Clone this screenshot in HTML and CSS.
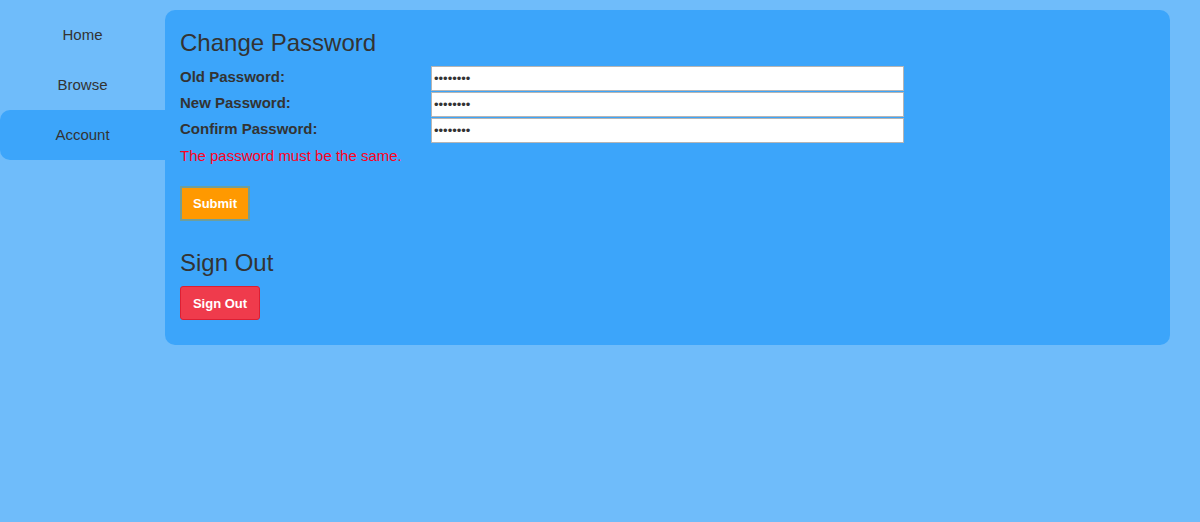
FILE: index.html
```html
<!DOCTYPE html>
<html>
<head>
<meta charset="utf-8">
<link rel="stylesheet" href="styles.css">
</head>
<body>
<div class="layout">
  <nav class="sidebar">
    <a class="nav-item">Home</a>
    <a class="nav-item">Browse</a>
    <a class="nav-item active">Account</a>
  </nav>
  <main class="panel">
    <h2 class="title">Change Password</h2>
    <div class="form-row"><label class="label">Old Password:</label><input class="field" type="password" value="12345678"></div>
    <div class="form-row"><label class="label">New Password:</label><input class="field" type="password" value="12345678"></div>
    <div class="form-row"><label class="label">Confirm Password:</label><input class="field" type="password" value="12345678"></div>
    <p class="error">The password must be the same.</p>
    <button class="btn submit">Submit</button>
    <h2 class="title signout-title">Sign Out</h2>
    <button class="btn signout">Sign Out</button>
  </main>
</div>
</body>
</html>
```
FILE: styles.css
```css
html, body {
  margin: 0;
  padding: 0;
  background: #6fbcfa;
  font-family: "Liberation Sans", Arial, sans-serif;
  color: #333;
}
.layout {
  display: flex;
  align-items: flex-start;
  padding: 10px 30px 0 0;
}
.sidebar {
  width: 165px;
  flex: none;
  display: flex;
  flex-direction: column;
}
.nav-item {
  height: 50px;
  line-height: 50px;
  text-align: center;
  font-size: 15px;
  color: #333;
}
.nav-item.active {
  background: #3ca5fa;
  border-radius: 10px 0 0 10px;
}
.panel {
  flex: 1;
  background: #3ca5fa;
  border-radius: 10px;
  padding: 15px 15px 25px 15px;
  display: flex;
  flex-direction: column;
  align-items: flex-start;
}
.title {
  margin: 0 0 5px 0;
  font-size: 24px;
  font-weight: normal;
  line-height: 36px;
}
.form-row {
  display: flex;
  height: 26px;
}
.label {
  width: 251px;
  font-size: 15px;
  font-weight: bold;
  line-height: 17px;
  padding-top: 2px;
}
.field {
  width: 473px;
  height: 25px;
  box-sizing: border-box;
  margin: 0;
  border: 1px solid #b5b5b5;
  padding: 0 2px;
  font-size: 13px;
  background: #fff;
  color: #333;
}
.error {
  margin: 3px 0 0 0;
  font-size: 15px;
  line-height: 17px;
  color: #ff0020;
}
.btn {
  font-family: "Liberation Sans", Arial, sans-serif;
  font-size: 13px;
  font-weight: bold;
  color: #fff;
  height: 34px;
  padding: 0;
  cursor: pointer;
}
.submit {
  margin-top: 22px;
  width: 70px;
  height: 35px;
  background: #ff9900;
  border: 2px solid #6f9e9a;
}
.signout-title {
  margin-top: 27px;
  margin-bottom: 8px;
  line-height: 30px;
}
.signout {
  width: 80px;
  background: #ef3b4c;
  border: 1px solid #dd1f33;
  border-radius: 3px;
}
```
